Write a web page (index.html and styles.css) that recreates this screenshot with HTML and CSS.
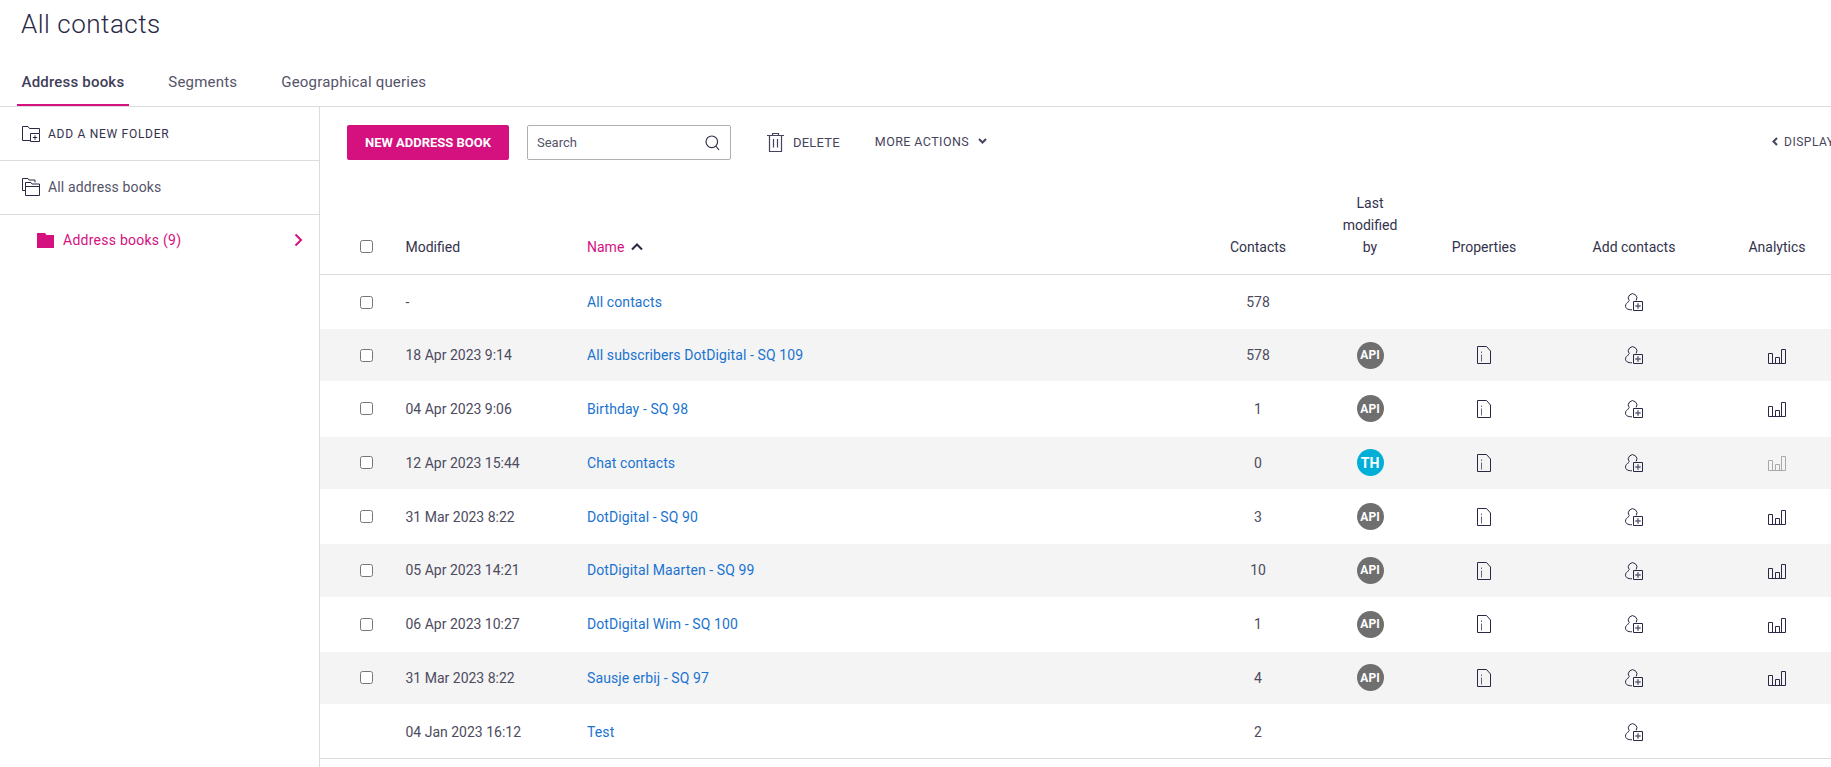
FILE: index.html
```html
<!DOCTYPE html>
<html lang="en">
<head>
<meta charset="utf-8">
<title>All contacts</title>
<link rel="stylesheet" href="styles.css">
</head>
<body>
<svg class="sprite" xmlns="http://www.w3.org/2000/svg">
  <symbol id="i-props" viewBox="0 0 14 18"><path d="M.5.5H9.500L13.500 5V17.500H.5Z" fill="none" stroke="currentColor"/><path d="M4.500 8.500V15.500M4.500 5.500V7" fill="none" stroke="currentColor" stroke-opacity=".7"/></symbol>
  <symbol id="i-add" viewBox="0 0 18 18"><path d="M4.300 7.800A4.300 4.300 0 1 1 11.200 7.400M4 8.400C1.800 9.600.5 11.200.5 13.100.5 15.300 2.400 16.800 7 16.800" fill="none" stroke="currentColor"/><path d="M8.500 8.500H17.500V17.500H8.500Z" fill="none" stroke="currentColor"/><path d="M13 10.300V15.700M10.300 13H15.700" fill="none" stroke="currentColor" stroke-width="1.400" stroke-opacity=".75"/></symbol>
  <symbol id="i-chart" viewBox="0 0 18 15"><path d="M.5 14.500H17.500M.5 14.500V4.500H4.500V14.500M7.500 14.500V8.500H11.500V14.500M13.500 14.500V.5H17.500V14.500" fill="none" stroke="currentColor"/></symbol>
</svg>

<header class="page-head">
  <h1 class="title">All contacts</h1>
  <nav class="tabs">
    <a class="tab tab-active">Address books</a>
    <a class="tab">Segments</a>
    <a class="tab">Geographical queries</a>
  </nav>
</header>

<div class="layout">
  <aside class="side">
    <div class="side-row side-action">
      <svg class="side-icon" viewBox="0 0 18 16" width="18" height="16"><path d="M8 14.500H.5V.5H6L7.500 2.500H17.500V7" fill="none" stroke="currentColor"/><path d="M8.500 7.500H17.500V15.500H8.500Z" fill="none" stroke="currentColor"/><path d="M13 9.300V13.700M10.800 11.500H15.200" fill="none" stroke="currentColor"/></svg>
      <span>ADD A NEW FOLDER</span>
    </div>
    <div class="side-row side-all">
      <svg class="side-icon" viewBox="0 0 18 18" width="18" height="18"><path d="M3.500 12.500H.5V.5H6L7 2H13V4.500" fill="none" stroke="currentColor"/><path d="M3.500 4.500H9L10 6H17.500V17.500H3.500Z" fill="none" stroke="currentColor"/><path d="M3.500 8.500H17.500" fill="none" stroke="currentColor"/></svg>
      <span>All address books</span>
    </div>
    <div class="side-folder">
      <svg class="folder-icon" viewBox="0 0 17 15" width="17" height="15"><path d="M0 0H8L9.500 2H17V15H0Z" fill="currentColor"/></svg>
      <span class="folder-label">Address books (9)</span>
      <svg class="folder-chevron" viewBox="0 0 9 14" width="9" height="14"><path d="M1.500 1.500L7 7L1.500 12.500" fill="none" stroke="currentColor" stroke-width="2"/></svg>
    </div>
  </aside>

  <main class="main">
    <div class="toolbar">
      <button class="btn-primary">NEW ADDRESS BOOK</button>
      <div class="search">
        <span class="search-text">Search</span>
        <svg viewBox="0 0 15 16" width="15" height="16"><circle cx="6.800" cy="6.800" r="5.800" fill="none" stroke="currentColor" stroke-width="1.200"/><path d="M10.800 11L14 15" fill="none" stroke="currentColor" stroke-width="1.200"/></svg>
      </div>
      <div class="tool tool-delete">
        <svg viewBox="0 0 17 19" width="17" height="19"><path d="M0 2.500H17M5.500 2.500V.5H11.500V2.500M2.500 2.500V18.500H14.500V2.500M6.500 6V14.500M10.500 6V14.500" fill="none" stroke="currentColor" stroke-width="1.200"/></svg>
        <span>DELETE</span>
      </div>
      <div class="tool tool-more">
        <span>MORE ACTIONS</span>
        <svg viewBox="0 0 9 6" width="9" height="6"><path d="M1 1L4.500 4.500L8 1" fill="none" stroke="currentColor" stroke-width="2"/></svg>
      </div>
      <div class="tool tool-display">
        <svg viewBox="0 0 6 9" width="6" height="9"><path d="M5 1L1.500 4.500L5 8" fill="none" stroke="currentColor" stroke-width="2"/></svg>
        <span>DISPLAY OPTIONS</span>
      </div>
    </div>

    <div class="table">
      <div class="row row-head">
        <div class="cell cell-check"><input type="checkbox" class="check"></div>
        <div class="cell">Modified</div>
        <div class="cell cell-sort"><span class="sort-label">Name</span><svg viewBox="0 0 12 8" width="12" height="8"><path d="M1 6.500L6 1.500L11 6.500" fill="none" stroke="currentColor" stroke-width="2"/></svg></div>
        <div class="cell cell-c">Contacts</div>
        <div class="cell cell-c">Last<br>modified<br>by</div>
        <div class="cell cell-c">Properties</div>
        <div class="cell cell-c">Add contacts</div>
        <div class="cell cell-c">Analytics</div>
      </div>

      <div class="row row-first">
        <div class="cell cell-check"><input type="checkbox" class="check"></div>
        <div class="cell">-</div>
        <div class="cell"><a class="link">All contacts</a></div>
        <div class="cell cell-c">578</div>
        <div class="cell cell-c"></div>
        <div class="cell cell-c"></div>
        <div class="cell cell-c"><svg class="ic-add"><use href="#i-add"/></svg></div>
        <div class="cell cell-c"></div>
      </div>

      <div class="row row-even">
        <div class="cell cell-check"><input type="checkbox" class="check"></div>
        <div class="cell">18 Apr 2023 9:14</div>
        <div class="cell"><a class="link">All subscribers DotDigital - SQ 109</a></div>
        <div class="cell cell-c">578</div>
        <div class="cell cell-c"><span class="avatar">API</span></div>
        <div class="cell cell-c"><svg class="ic-props"><use href="#i-props"/></svg></div>
        <div class="cell cell-c"><svg class="ic-add"><use href="#i-add"/></svg></div>
        <div class="cell cell-c"><svg class="ic-chart"><use href="#i-chart"/></svg></div>
      </div>

      <div class="row row-odd">
        <div class="cell cell-check"><input type="checkbox" class="check"></div>
        <div class="cell">04 Apr 2023 9:06</div>
        <div class="cell"><a class="link">Birthday - SQ 98</a></div>
        <div class="cell cell-c">1</div>
        <div class="cell cell-c"><span class="avatar">API</span></div>
        <div class="cell cell-c"><svg class="ic-props"><use href="#i-props"/></svg></div>
        <div class="cell cell-c"><svg class="ic-add"><use href="#i-add"/></svg></div>
        <div class="cell cell-c"><svg class="ic-chart"><use href="#i-chart"/></svg></div>
      </div>

      <div class="row row-even">
        <div class="cell cell-check"><input type="checkbox" class="check"></div>
        <div class="cell">12 Apr 2023 15:44</div>
        <div class="cell"><a class="link">Chat contacts</a></div>
        <div class="cell cell-c">0</div>
        <div class="cell cell-c"><span class="avatar avatar-user">TH</span></div>
        <div class="cell cell-c"><svg class="ic-props"><use href="#i-props"/></svg></div>
        <div class="cell cell-c"><svg class="ic-add"><use href="#i-add"/></svg></div>
        <div class="cell cell-c"><svg class="ic-chart ic-disabled"><use href="#i-chart"/></svg></div>
      </div>

      <div class="row row-odd">
        <div class="cell cell-check"><input type="checkbox" class="check"></div>
        <div class="cell">31 Mar 2023 8:22</div>
        <div class="cell"><a class="link">DotDigital - SQ 90</a></div>
        <div class="cell cell-c">3</div>
        <div class="cell cell-c"><span class="avatar">API</span></div>
        <div class="cell cell-c"><svg class="ic-props"><use href="#i-props"/></svg></div>
        <div class="cell cell-c"><svg class="ic-add"><use href="#i-add"/></svg></div>
        <div class="cell cell-c"><svg class="ic-chart"><use href="#i-chart"/></svg></div>
      </div>

      <div class="row row-even">
        <div class="cell cell-check"><input type="checkbox" class="check"></div>
        <div class="cell">05 Apr 2023 14:21</div>
        <div class="cell"><a class="link">DotDigital Maarten - SQ 99</a></div>
        <div class="cell cell-c">10</div>
        <div class="cell cell-c"><span class="avatar">API</span></div>
        <div class="cell cell-c"><svg class="ic-props"><use href="#i-props"/></svg></div>
        <div class="cell cell-c"><svg class="ic-add"><use href="#i-add"/></svg></div>
        <div class="cell cell-c"><svg class="ic-chart"><use href="#i-chart"/></svg></div>
      </div>

      <div class="row row-odd">
        <div class="cell cell-check"><input type="checkbox" class="check"></div>
        <div class="cell">06 Apr 2023 10:27</div>
        <div class="cell"><a class="link">DotDigital Wim - SQ 100</a></div>
        <div class="cell cell-c">1</div>
        <div class="cell cell-c"><span class="avatar">API</span></div>
        <div class="cell cell-c"><svg class="ic-props"><use href="#i-props"/></svg></div>
        <div class="cell cell-c"><svg class="ic-add"><use href="#i-add"/></svg></div>
        <div class="cell cell-c"><svg class="ic-chart"><use href="#i-chart"/></svg></div>
      </div>

      <div class="row row-even">
        <div class="cell cell-check"><input type="checkbox" class="check"></div>
        <div class="cell">31 Mar 2023 8:22</div>
        <div class="cell"><a class="link">Sausje erbij - SQ 97</a></div>
        <div class="cell cell-c">4</div>
        <div class="cell cell-c"><span class="avatar">API</span></div>
        <div class="cell cell-c"><svg class="ic-props"><use href="#i-props"/></svg></div>
        <div class="cell cell-c"><svg class="ic-add"><use href="#i-add"/></svg></div>
        <div class="cell cell-c"><svg class="ic-chart"><use href="#i-chart"/></svg></div>
      </div>

      <div class="row row-last">
        <div class="cell cell-check"></div>
        <div class="cell">04 Jan 2023 16:12</div>
        <div class="cell"><a class="link">Test</a></div>
        <div class="cell cell-c">2</div>
        <div class="cell cell-c"></div>
        <div class="cell cell-c"></div>
        <div class="cell cell-c"><svg class="ic-add"><use href="#i-add"/></svg></div>
        <div class="cell cell-c"></div>
      </div>
    </div>
  </main>
</div>
</body>
</html>
```

FILE: styles.css
```css
* { box-sizing: border-box; }
html, body { height: 100%; }
body {
  margin: 0;
  overflow: hidden;
  background: #fff;
  color: #4c4b60;
  font-family: Roboto, "Liberation Sans", sans-serif;
  font-size: 14px;
  display: flex;
  flex-direction: column;
}
.sprite { display: none; }

.page-head { flex: none; border-bottom: 1px solid #dcdcdc; }
.title {
  margin: 0;
  padding: 8px 0 0 21px;
  height: 58px;
  font-size: 26px;
  line-height: 32px;
  font-weight: 300;
  letter-spacing: .5px;
  color: #2a2945;
}
.tabs { display: flex; padding-left: 16.500px; height: 48px; }
.tab {
  display: flex;
  align-items: center;
  padding: 2px 5px 0;
  margin-right: 34px;
  font-size: 15px;
  letter-spacing: .2px;
  color: #55546a;
  border-bottom: 2px solid transparent;
}
.tab-active {
  color: #3f3e58;
  font-weight: 500;
  border-bottom-color: #d5107f;
}

.layout { flex: 1; display: flex; min-height: 0; }
.side { flex: none; width: 320px; border-right: 1px solid #dcdcdc; }
.side-row {
  display: flex;
  align-items: center;
  gap: 8px;
  height: 54px;
  padding: 0 0 1px 22px;
  border-bottom: 1px solid #dcdcdc;
}
.side-icon { flex: none; color: #2a2945; }
.side-action { padding-bottom: 0; font-size: 12px; letter-spacing: .72px; color: #33324c; }
.side-all { color: #55546a; letter-spacing: .15px; }
.side-folder {
  display: flex;
  align-items: center;
  height: 50px;
  padding: 0 16px 0 37px;
  color: #d5107f;
}
.folder-label { flex: 1; margin-left: 9px; letter-spacing: .25px; }
.folder-chevron { flex: none; }

.main { flex: 1; min-width: 0; overflow: hidden; }
.toolbar {
  display: flex;
  align-items: center;
  height: 53px;
  padding: 18px 0 0 27px;
  white-space: nowrap;
}
.btn-primary {
  flex: none;
  width: 162px;
  height: 35px;
  padding: 0;
  border: 0;
  border-radius: 2px;
  background: #d5107f;
  color: #fff;
  font: 700 13px Roboto, "Liberation Sans", sans-serif;
}
.search {
  flex: none;
  display: flex;
  align-items: center;
  justify-content: space-between;
  width: 204px;
  height: 35px;
  margin-left: 18px;
  padding: 0 10px 0 9px;
  border: 1px solid #b0b0b0;
  border-radius: 2px;
  color: #33324c;
  font-size: 13px;
}
.search-text { color: #55546a; }
.tool {
  flex: none;
  display: flex;
  align-items: center;
  font-size: 13px;
  letter-spacing: .5px;
  color: #45445c;
}
.tool-delete { gap: 9px; margin-left: 36px; letter-spacing: .2px; }
.tool-more { gap: 9px; margin-left: 35px; padding-bottom: 3px; font-size: 12.500px; letter-spacing: .42px; }
.tool-display { gap: 6px; margin-left: 785px; padding-bottom: 2px; font-size: 12px; }

.row {
  display: grid;
  grid-template-columns: 85.500px 181.500px 621px 100px 124px 104px 196px 90px 9px;
  align-items: center;
}
.row-head {
  height: 115px;
  align-items: end;
  padding-bottom: 16px;
  border-bottom: 1px solid #dcdcdc;
  line-height: 22px;
  color: #33324c;
}
.row-first { height: 54px; }
.row-even { height: 52.400px; background: #f4f4f4; }
.row-odd { height: 55.200px; }
.row-last { height: 55px; padding-top: 1px; border-bottom: 1px solid #dcdcdc; }

.cell { min-width: 0; }
.cell-c { text-align: center; }
.cell-check { display: flex; padding-left: 40px; }
.row-head .cell-check { padding-bottom: 5px; }
.check { width: 13px; height: 13px; margin: 0; }
.cell-sort { display: flex; align-items: center; gap: 7px; }
.cell-sort svg { color: #2a2945; }
.sort-label { color: #d5107f; }
.link { color: #1a73d0; letter-spacing: .1px; }

.avatar {
  display: inline-flex;
  align-items: center;
  justify-content: center;
  width: 27px;
  height: 27px;
  border-radius: 50%;
  background: #6f6f6f;
  color: #fff;
  font-size: 12px;
  font-weight: 700;
  vertical-align: middle;
}
.avatar-user { background: #00afd7; font-size: 14px; }

.ic-props, .ic-add, .ic-chart { display: inline-block; vertical-align: middle; color: #2a2945; }
.ic-props { width: 14px; height: 18px; }
.ic-add { width: 18px; height: 18px; }
.ic-chart { width: 18px; height: 15px; }
.ic-disabled { color: #a9a9a9; }
```
